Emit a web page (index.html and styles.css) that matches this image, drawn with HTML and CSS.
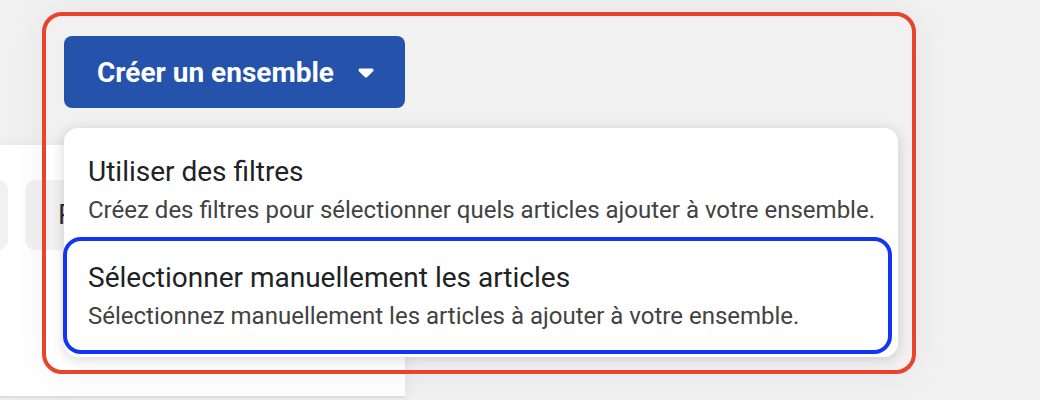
FILE: index.html
```html
<!DOCTYPE html>
<html lang="fr">
<head>
    <meta charset="UTF-8">
    <meta name="viewport" content="width=device-width, initial-scale=1.0">
    <title>Créer un ensemble</title>
    <link rel="stylesheet" href="styles.css">
</head>
<body>
    <div class="page">
        <div class="panel">
            <div class="chips">
                <div class="chip chip-first"></div>
                <div class="chip">P</div>
            </div>
        </div>

        <div class="highlight">
            <button class="create-btn">
                Créer un ensemble
                <svg class="caret" width="16" height="10" viewBox="0 0 16 10">
                    <path d="M2 0.5 H14 A1.6 1.6 0 0 1 15.1 3.2 L9.2 9 A1.7 1.7 0 0 1 6.8 9 L0.9 3.2 A1.6 1.6 0 0 1 2 0.5 Z" fill="#fff"/>
                </svg>
            </button>
            <div class="menu">
                <div class="menu-item">
                    <div class="item-title">Utiliser des filtres</div>
                    <div class="item-desc">Créez des filtres pour sélectionner quels articles ajouter à votre ensemble.</div>
                </div>
                <div class="menu-item focused">
                    <div class="item-title">Sélectionner manuellement les articles</div>
                    <div class="item-desc">Sélectionnez manuellement les articles à ajouter à votre ensemble.</div>
                </div>
            </div>
        </div>
    </div>
</body>
</html>
```

FILE: styles.css
```css
body {
    margin: 0;
    font-family: Roboto, 'Noto Sans', sans-serif;
    background-color: #f1f1f1;
    color: #222;
}

.page {
    position: relative;
    width: 1040px;
    height: 400px;
    overflow: hidden;
}

.panel {
    margin-top: 145px;
    width: 405px;
    height: 251px;
    background-color: #fff;
    border-bottom: 2px solid #dedede;
    box-shadow: 2px 0 14px rgba(0, 0, 0, 0.06);
    overflow: hidden;
}

.chips {
    display: flex;
    gap: 17px;
    padding-top: 35px;
}

.chip {
    width: 300px;
    height: 70px;
    border-radius: 10px;
    background-color: #f1f1f1;
    font-size: 28px;
    line-height: 70px;
    padding-left: 33px;
    color: #303030;
    flex-shrink: 0;
    box-sizing: border-box;
}

.chip-first {
    width: 60px;
    margin-left: -52px;
}

/* annotation box drawn over the page */
.highlight {
    position: absolute;
    left: 42px;
    top: 12px;
    width: 874px;
    height: 362px;
    box-sizing: border-box;
    border: 4px solid #e9432b;
    border-radius: 20px;
    padding: 20px 0 0 18px;
    box-shadow: 0 0 40px rgba(0, 0, 0, 0.05);
}

.create-btn {
    display: flex;
    align-items: center;
    gap: 24px;
    height: 72px;
    padding: 0 31px 0 33px;
    border: none;
    border-radius: 8px;
    background-color: #2552ab;
    color: #fff;
    font-family: Roboto, sans-serif;
    font-size: 28px;
    font-weight: 700;
    cursor: pointer;
}

.caret {
    margin-top: 2px;
}

.menu {
    margin-top: 20px;
    width: 834px;
    background-color: #fff;
    border-radius: 14px;
    box-shadow: 0 2px 14px rgba(0, 0, 0, 0.16);
    padding-bottom: 3px;
}

.menu-item {
    padding: 24px 24px 9px;
    white-space: nowrap;
}

.item-title {
    font-size: 28px;
    line-height: 40px;
    color: #202223;
}

.item-desc {
    font-size: 24px;
    line-height: 36px;
    color: #424242;
}

.menu-item.focused {
    margin: 0 6px 0 -1px;
    padding: 17px 20px 16px 21px;
    border: 4px solid #1434f4;
    border-radius: 18px;
}
```
